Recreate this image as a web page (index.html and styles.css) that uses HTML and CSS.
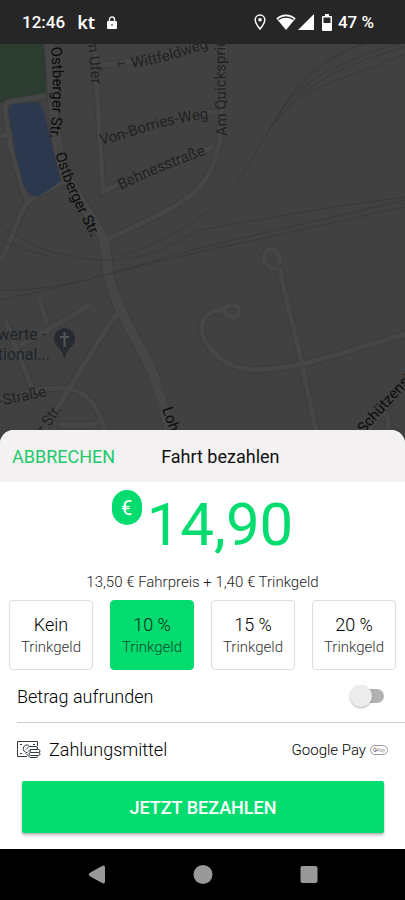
FILE: index.html
```html
<!DOCTYPE html>
<html lang="de">
  <head>
    <meta charset="UTF-8">
    <meta name="viewport" content="width=device-width, initial-scale=1">
    <title>Fahrt bezahlen</title>
    <link rel="stylesheet" href="styles.css">
  </head>
  <body>
    <header class="status-bar">
      <span class="clock">12:46</span>
      <span class="carrier">kt</span>
      <svg class="lock" width="10" height="13" viewBox="0 0 10 13" aria-hidden="true">
        <path d="M2.5 6V3.4a2.5 2.5 0 0 1 5 0V6" fill="none" stroke="#fff" stroke-width="1.4"/>
        <rect x="0" y="5" width="10" height="8" rx="1" fill="#fff"/>
        <circle cx="5" cy="9" r="1" fill="#777"/>
      </svg>
      <div class="status-icons">
        <svg width="12" height="16" viewBox="0 0 12 16" aria-hidden="true">
          <path d="M6 1a4.8 4.8 0 0 0-4.8 4.8C1.200 9.300 6 15 6 15s4.800-5.700 4.800-9.200A4.800 4.800 0 0 0 6 1z" fill="none" stroke="#fff" stroke-width="1.500"/>
          <circle cx="6" cy="5.800" r="1.800" fill="#fff"/>
        </svg>
        <svg class="wifi" width="20" height="16" viewBox="0 0 20 16" aria-hidden="true">
          <path d="M10 16L.3 4.200C3 1.700 6.300.4 10 .4s7 1.300 9.700 3.800z" fill="#fff"/>
          <path d="M2.500 5.500C7 2.300 13 2.300 17.500 5.500" fill="none" stroke="#262626" stroke-width="1.500"/>
        </svg>
        <svg width="16" height="16" viewBox="0 0 16 16" aria-hidden="true">
          <path d="M0 16L16 0v16z" fill="#fff"/>
        </svg>
        <svg class="battery" width="10" height="17" viewBox="0 0 10 17" aria-hidden="true">
          <path d="M3 0h4v2h2a1 1 0 0 1 1 1v13a1 1 0 0 1-1 1H1a1 1 0 0 1-1-1V3a1 1 0 0 1 1-1h2z" fill="#fff"/>
          <path d="M1.500 3.500h7v5.500h-7z" fill="#262626"/>
        </svg>
        <span class="clock">47 %</span>
      </div>
    </header>

    <svg class="map" viewBox="0 44 405 400" preserveAspectRatio="xMidYMin slice" role="img" aria-label="Karte">
      <defs>
        <path id="ostberger-a" d="M51 47C54 80 53 110 49 145"/>
        <path id="ostberger-b" d="M55 154C66 190 78 212 98 250"/>
        <path id="ufer" d="M86 30C89 55 91 70 92 100"/>
        <path id="wittfeld" d="M132 68C160 64 182 57 225 42"/>
        <path id="borries" d="M101 145C133 138 160 123 215 118"/>
        <path id="behnes" d="M121 190C145 178 174 165 220 150"/>
        <path id="quick" d="M227 136C226 105 224 74 226 20"/>
        <path id="lohe" d="M162 409L180 460"/>
        <path id="schuetzen" d="M364 434C378 418 392 402 430 361"/>

        <!-- each road is drawn twice: edge first, then surface -->
        <g id="roads-wide">
          <path d="M49 38C55 100 52 148 67 178L101 234C109 252 105 270 112 287C118 312 141 345 155 378L175 450"/>
        </g>
        <g id="roads">
          <path d="M94 38L97 90L103 192L117 185L213 147"/>
          <path d="M225 38L220 138C213 185 192 197 155 217L105 240"/>
          <path d="M98 66L132 61L205 44M200 113L218 112"/>
          <path d="M5 103C8 145 13 160 28 204M0 136L12 133M5 103L45 96M66 180L30 200C18 212 15 235 0 262"/>
          <path d="M39 296L47 325M20 346L90 305M5 320C14 343 24 367 33 390"/>
          <path d="M120 310C103 332 92 352 70 387L40 438M0 400C20 395 42 387 66 388C89 391 107 414 106 450M60 425H92L103 420"/>
          <path d="M280 268C285 300 297 337 302 364L320 450"/>
          <path d="M277 269C266 269 260 257 267 251C276 245 282 257 278 265"/>
          <path d="M221 310C232 302 242 306 239 314C235 321 228 316 221 310C202 310 196 331 208 345C229 373 252 374 302 364C330 358 375 342 410 333"/>
          <path d="M352 450L410 378M385 413C391 419 391 428 380 445"/>
        </g>
      </defs>

      <rect x="0" y="44" width="405" height="400" fill="#414141"/>
      <path d="M0 44H45L46 94L0 103z" fill="#2d3c30"/>

      <g class="road-edge">
        <use href="#roads" stroke-width="7"/>
        <use href="#roads-wide" stroke-width="12"/>
      </g>
      <g class="road">
        <use href="#roads" stroke-width="5"/>
        <use href="#roads-wide" stroke-width="10"/>
      </g>
      <path d="M8 110L14 104L38 102L43 108L61 181L38 197L30 194L24 187L17 160z" fill="#2c384d"/>

      <g class="rail">
        <path d="M0 290C60 292 110 273 200 248L405 200M0 300C70 286 120 270 200 252L405 207"/>
        <path d="M0 226C40 253 80 263 125 259C160 255 190 234 200 230L333 207L405 197"/>
        <path d="M120 257C150 247 190 228 218 203C247 175 256 150 276 119C296 86 328 52 380 38"/>
        <path d="M268 132C289 92 318 66 400 44M268 132C290 96 325 70 405 47M272 127C304 84 334 84 405 54"/>
        <path d="M280 112C300 78 320 58 365 44M0 240C20 248 30 252 50 256"/>
      </g>

      <g class="street">
        <text class="main"><textPath href="#ostberger-a">Ostberger Str.</textPath></text>
        <text class="main"><textPath href="#ostberger-b">Ostberger Str.</textPath></text>
        <text><textPath href="#ufer">Am Ufer</textPath></text>
        <text><textPath href="#wittfeld">Wittfeldweg</textPath></text>
        <text><textPath href="#borries">Von-Borries-Weg</textPath></text>
        <text><textPath href="#behnes">Behnesstraße</textPath></text>
        <text><textPath href="#quick">Am Quickspring</textPath></text>
        <text class="main"><textPath href="#lohe">Lohe</textPath></text>
        <text class="main"><textPath href="#schuetzen">Schützenstr.</textPath></text>
        <text transform="translate(-5 407) rotate(-12)">r-Straße</text>
        <text transform="translate(40 441) rotate(-56)">er Str.</text>
        <path d="M125 63L117 64M120 61L117 64L120 66" fill="none" stroke="#242424"/>
      </g>

      <g class="place">
        <text x="46" y="340" text-anchor="end">Schwerte -</text>
        <text x="50" y="360" text-anchor="end">International...</text>
        <path d="M64.500 328a10.500 10.500 0 0 0-10.500 10.500c0 8 8 9 10.500 20.500c2.500-11.500 10.500-12.500 10.500-20.500A10.500 10.500 0 0 0 64.500 328z" fill="#252b31"/>
        <path d="M64.500 332V347M60 337H69" stroke="#555" stroke-width="2"/>
      </g>
    </svg>

    <main class="sheet">
      <div class="sheet-header">
        <button type="button" class="cancel">ABBRECHEN</button>
        <h1 class="title">Fahrt bezahlen</h1>
      </div>

      <div class="price">
        <span class="currency">€</span>
        <span class="amount">14,90</span>
      </div>
      <p class="breakdown">13,50 € Fahrpreis + 1,40 € Trinkgeld</p>

      <div class="tips" role="group" aria-label="Trinkgeld">
        <button type="button" class="tip" aria-pressed="false">Kein<small>Trinkgeld</small></button>
        <button type="button" class="tip selected" aria-pressed="true">10 %<small>Trinkgeld</small></button>
        <button type="button" class="tip" aria-pressed="false">15 %<small>Trinkgeld</small></button>
        <button type="button" class="tip" aria-pressed="false">20 %<small>Trinkgeld</small></button>
      </div>

      <div class="row row-round">
        <label for="roundUp">Betrag aufrunden</label>
        <input type="checkbox" id="roundUp" class="switch" role="switch">
      </div>

      <div class="row">
        <svg class="cash" width="24" height="18" viewBox="0 0 24 18" fill="none" stroke="#333b40" aria-hidden="true">
          <path d="M10 15.500H.5V.5H20.500V5"/>
          <path d="M3 3.500h2M16 3.500h2M3 12.500h2"/>
          <path d="M12 4.500A3.800 3.800 0 1 0 10.500 11.500"/>
          <path d="M9 8.500L12 5.500H19a1.500 1.500 0 0 1 0 3H13L11 10.500"/>
          <rect x="13" y="8.500" width="10" height="3" rx="1.500"/>
          <rect x="12" y="11.500" width="11" height="3" rx="1.500"/>
          <path d="M9 12.500L13 16.500H20a1.500 1.500 0 0 0 0-2"/>
        </svg>
        <span>Zahlungsmittel</span>
        <span class="method">Google Pay</span>
        <svg class="gpay" width="18" height="10" viewBox="0 0 18 10" aria-hidden="true">
          <rect x=".5" y=".5" width="17" height="9" rx="4.500" fill="#fff" stroke="#999"/>
          <path d="M6.200 3.700A1.600 1.600 0 0 0 3.500 4.200" fill="none" stroke="#e06050"/>
          <path d="M3.500 4.200A1.600 1.600 0 0 0 4 6.200" fill="none" stroke="#d0a030"/>
          <path d="M4 6.200A1.600 1.600 0 0 0 6.600 5H5" fill="none" stroke="#4a70c0"/>
          <text x="7" y="7" font-size="5" fill="#555">Pay</text>
        </svg>
      </div>

      <button type="button" class="pay">JETZT BEZAHLEN</button>
    </main>

    <nav class="nav-bar">
      <button type="button" aria-label="Zurück">
        <svg width="20" height="20" viewBox="0 0 20 20"><path d="M2.500 8L15.500.7Q18 0 18 2.500V16.500Q18 19 15.500 18.200L2.500 11Q1 9.500 2.500 8z"/></svg>
      </button>
      <button type="button" aria-label="Startseite">
        <svg width="20" height="20" viewBox="0 0 20 20"><circle cx="10" cy="9.500" r="9.500"/></svg>
      </button>
      <button type="button" aria-label="Übersicht">
        <svg width="20" height="20" viewBox="0 0 20 20"><rect x="1.500" y="1" width="17" height="17" rx="2"/></svg>
      </button>
    </nav>
  </body>
</html>
```

FILE: styles.css
```css
* {
  box-sizing: border-box;
}
body {
  margin: 0;
  min-height: 100vh;
  display: flex;
  flex-direction: column;
  font-family: Roboto, "Liberation Sans", sans-serif;
  background: #414141;
  color: #111;
}
button {
  font: inherit;
  border: 0;
  padding: 0;
  background: none;
  cursor: pointer;
}
svg {
  flex-shrink: 0;
}

.status-bar {
  display: flex;
  align-items: center;
  height: 44px;
  padding: 0 31px 0 22px;
  background: #262626;
  color: #fff;
}
.clock {
  font-size: 17px;
  font-weight: 500;
}
.carrier {
  margin-left: 12px;
  font-family: "Noto Sans", sans-serif;
  font-size: 18px;
  font-weight: 600;
}
.lock {
  margin-left: 12px;
}
.status-icons {
  display: flex;
  align-items: center;
  margin-left: auto;
}
.wifi {
  margin-left: 10px;
  margin-right: 2px;
}
.battery {
  margin: 0 6px 0 8px;
}

.map {
  display: block;
  width: 100%;
  height: 0;
  min-height: 200px;
  flex: 1 0 0;
  margin-bottom: -14px;
}
.road-edge {
  fill: none;
  stroke: #3c3c3c;
}
.road {
  fill: none;
  stroke: #464646;
}
.rail {
  fill: none;
  stroke: #393939;
}
.street text {
  font-size: 15px;
  fill: #222;
}
.street .main {
  fill: #0c0c0c;
}
.place text {
  font-size: 16px;
  fill: #20262b;
}

.sheet {
  position: relative;
  border-radius: 14px 14px 0 0;
  overflow: hidden;
  background: #fff;
}
.sheet-header {
  display: flex;
  align-items: center;
  gap: 46px;
  height: 52px;
  padding: 0 12px;
  background: #f3f1f2;
}
.cancel {
  font-size: 18px;
  color: #1dcb6b;
}
.title {
  margin: 0;
  font-size: 18px;
  font-weight: 400;
}
.price {
  display: flex;
  justify-content: center;
  gap: 5px;
  padding-top: 8px;
  color: #04dc70;
}
.currency {
  width: 30px;
  height: 35px;
  border-radius: 15px;
  background: #04dc70;
  color: #fff;
  font-size: 20px;
  line-height: 36px;
  text-align: center;
}
.amount {
  font-size: 60px;
  line-height: 70px;
}
.breakdown {
  margin: 12px 0 8px;
  font-size: 15px;
  font-weight: 300;
  line-height: 20px;
  text-align: center;
  color: #222;
}
.tips {
  display: grid;
  grid-template-columns: repeat(4, 1fr);
  gap: 17px;
  padding: 0 9px;
}
.tip {
  height: 70px;
  padding-top: 2px;
  border: 1px solid #ddd;
  border-radius: 4px;
  font-size: 18px;
  font-weight: 300;
  line-height: 22px;
  color: #000;
}
.tip small {
  display: block;
  font-size: 15px;
  color: #333;
}
.tip.selected {
  border-color: #04dc70;
  background: #04dc70;
  color: #062a16;
}
.tip.selected small {
  color: #0a4a28;
}
.row {
  display: flex;
  align-items: center;
  height: 53px;
  margin-left: 17px;
  padding-right: 17px;
  font-size: 18px;
  font-weight: 300;
  color: #000;
}
.row-round {
  justify-content: space-between;
  padding-right: 21px;
  border-bottom: 1px solid #ccc;
}
.switch {
  appearance: none;
  position: relative;
  width: 34px;
  height: 22px;
  margin: 0;
}
.switch::before {
  content: "";
  position: absolute;
  inset: 4px 0 4px 4px;
  border-radius: 7px;
  background: #b2b2b2;
}
.switch::after {
  content: "";
  position: absolute;
  left: 0;
  top: 0;
  width: 22px;
  height: 22px;
  border-radius: 50%;
  background: #ececec;
  box-shadow: 0 1px 2px rgba(0, 0, 0, 0.3);
}
.switch:checked::before {
  background: #8eeab9;
}
.switch:checked::after {
  left: 12px;
  background: #04dc70;
}
.cash {
  margin-right: 8px;
}
.method {
  margin-left: auto;
  font-size: 15px;
}
.gpay {
  margin-left: 4px;
}
.pay {
  display: block;
  width: calc(100% - 43px);
  height: 52px;
  margin: 5px 22px 16px;
  border-radius: 2px;
  background: #04dc70;
  box-shadow: 0 2px 3px rgba(0, 0, 0, 0.3);
  color: #fff;
  font-size: 18px;
  font-weight: 500;
}

.nav-bar {
  display: flex;
  justify-content: center;
  gap: 86px;
  height: 51px;
  background: #000;
}
.nav-bar button {
  display: flex;
  align-items: center;
}
.nav-bar svg {
  fill: #999;
}
```
